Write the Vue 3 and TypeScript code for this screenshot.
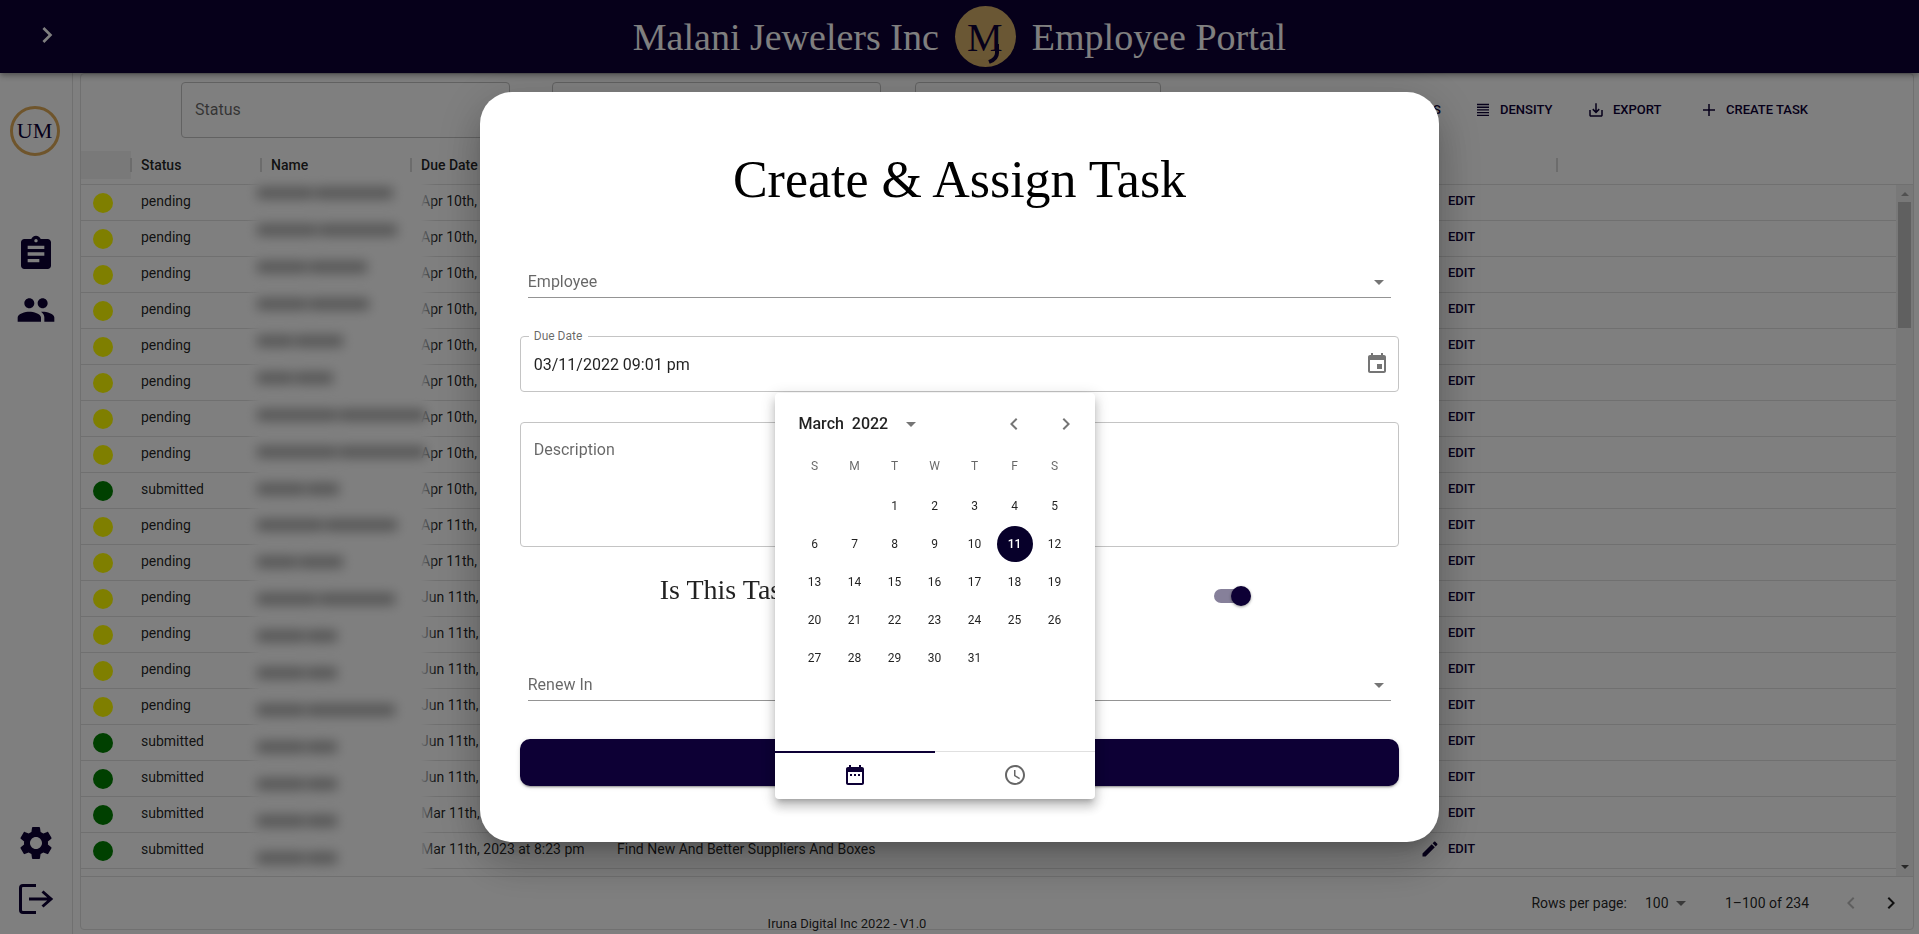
<script setup lang="ts">
import { ref } from 'vue'

interface TaskRow {
  status: 'pending' | 'submitted'
  due: string
  title: string
}

const row = (status: TaskRow['status'], due: string, title = ''): TaskRow => ({ status, due, title })

const rows: TaskRow[] = [
  ...Array.from({ length: 8 }, () => row('pending', 'Apr 10th, 2022 at 8:23 pm')),
  row('submitted', 'Apr 10th, 2022 at 8:23 pm'),
  ...Array.from({ length: 2 }, () => row('pending', 'Apr 11th, 2022 at 8:23 pm')),
  ...Array.from({ length: 4 }, () => row('pending', 'Jun 11th, 2022 at 8:23 pm')),
  ...Array.from({ length: 2 }, () => row('submitted', 'Jun 11th, 2022 at 8:23 pm')),
  row('submitted', 'Mar 11th, 2023 at 8:23 pm'),
  row('submitted', 'Mar 11th, 2023 at 8:23 pm', 'Find New And Better Suppliers And Boxes'),
]

// Widths of the two words of each concealed name
const hiddenNames: [number, number][] = [
  [56, 78], [60, 78], [50, 58], [50, 60], [36, 48], [36, 38], [80, 86], [80, 86], [48, 32],
  [66, 72], [40, 44], [60, 76], [48, 30], [48, 30], [48, 88], [48, 30], [48, 30], [48, 30], [48, 30],
]

const weekDays = ['S', 'M', 'T', 'W', 'T', 'F', 'S']
const days: (number | null)[] = [null, null, ...Array.from({ length: 31 }, (_, i) => i + 1)]
const selectedDay = ref(11)
const dueDate = ref('03/11/2022 09:01 pm')
const recurring = ref(true)
</script>

<template>
  <div class="portal">
    <header class="topbar">
      <button class="expand" aria-label="Open menu">
        <svg viewBox="0 0 24 24"><path d="M10 6 8.59 7.41 13.17 12l-4.58 4.59L10 18l6-6z" /></svg>
      </button>
      <div class="brand">
        <span>Malani Jewelers Inc</span>
        <svg class="logo" viewBox="0 0 61 61" role="img" aria-label="MJ">
          <circle cx="30.5" cy="30.5" r="30.5" />
          <text x="12" y="45" font-size="40">M</text>
          <path d="M42 38v9q0 6-8 9" />
        </svg>
        <span>Employee Portal</span>
      </div>
    </header>

    <div class="body">
      <nav class="sidebar" aria-label="Main">
        <div class="avatar">UM</div>
        <a href="#tasks" aria-label="Tasks">
          <svg viewBox="0 0 24 24"><path d="M19 3h-4.18C14.4 1.84 13.3 1 12 1c-1.3 0-2.4.84-2.82 2H5c-1.1 0-2 .9-2 2v14c0 1.1.9 2 2 2h14c1.1 0 2-.9 2-2V5c0-1.1-.9-2-2-2zm-7 0c.55 0 1 .45 1 1s-.45 1-1 1-1-.45-1-1 .45-1 1-1zm2 14H7v-2h7v2zm3-4H7v-2h10v2zm0-4H7V7h10v2z" /></svg>
        </a>
        <a href="#people" aria-label="People">
          <svg viewBox="0 0 24 24"><path d="M16 11c1.66 0 2.99-1.34 2.99-3S17.66 5 16 5c-1.66 0-3 1.34-3 3s1.34 3 3 3zm-8 0c1.66 0 2.99-1.34 2.99-3S9.66 5 8 5C6.34 5 5 6.34 5 8s1.34 3 3 3zm0 2c-2.33 0-7 1.17-7 3.5V19h14v-2.500c0-2.330-4.670-3.500-7-3.500zm8 0c-.29 0-.62.020-.97.050 1.160.840 1.970 1.970 1.970 3.450V19h6v-2.500c0-2.330-4.670-3.500-7-3.500z" /></svg>
        </a>
        <span class="push"></span>
        <a href="#settings" aria-label="Settings">
          <svg viewBox="0 0 24 24"><path d="M19.14 12.940c.040-.300.060-.610.060-.940 0-.320-.020-.640-.070-.940l2.030-1.580c.180-.140.230-.410.120-.610l-1.920-3.320c-.120-.220-.370-.290-.590-.220l-2.390.960c-.500-.380-1.030-.700-1.620-.940l-.360-2.540c-.040-.240-.240-.410-.480-.410h-3.840c-.240 0-.430.170-.470.410l-.360 2.540c-.590.240-1.130.570-1.620.940l-2.390-.960c-.220-.080-.470 0-.590.220L2.740 8.870c-.120.210-.080.470.120.610l2.030 1.580c-.050.300-.090.630-.090.940s.020.640.070.940l-2.030 1.580c-.180.140-.230.410-.120.610l1.920 3.320c.120.220.370.290.590.220l2.390-.960c.500.380 1.030.700 1.620.940l.360 2.540c.050.240.240.410.480.410h3.840c.240 0 .440-.170.470-.410l.360-2.540c.590-.240 1.130-.560 1.620-.940l2.390.960c.220.080.470 0 .590-.220l1.920-3.320c.120-.220.070-.470-.120-.610l-2.010-1.580zM12 15.600c-1.980 0-3.600-1.620-3.600-3.600s1.620-3.600 3.600-3.600 3.600 1.620 3.600 3.600-1.620 3.600-3.600 3.600z" /></svg>
        </a>
        <a href="#logout" aria-label="Log out">
          <svg class="line" viewBox="0 0 40 40"><path d="M20 6.500H7q-2.500 0-2.500 2.500v22q0 2.500 2.500 2.500h13M13 20h22M26.500 12.500 35 20l-8.500 7.500" /></svg>
        </a>
      </nav>

      <main class="paper">
        <div class="toolbar">
          <div class="filters">
            <div class="filter">
              <label for="f-status">Status</label>
              <select id="f-status"><option></option></select>
            </div>
            <div class="filter second"><select aria-label="Name"><option></option></select></div>
            <div class="filter third"><select aria-label="Due date"><option></option></select></div>
          </div>
          <div class="actions">
            <button>
              <svg viewBox="0 0 24 24"><path d="M10 18h4v-2h-4v2zM3 6v2h18V6H3zm3 7h12v-2H6v2z" /></svg>FILTERS
            </button>
            <button>
              <svg viewBox="0 0 24 24"><path d="M4 3.800h16v1.800H4zM4 7.400h16v1.800H4zM4 11h16v1.800H4zM4 14.600h16v1.800H4zM4 18.200h16V20H4z" /></svg>DENSITY
            </button>
            <button>
              <svg viewBox="0 0 24 24"><path d="M19 12v7H5v-7H3v7c0 1.100.900 2 2 2h14c1.100 0 2-.900 2-2v-7h-2zm-6 .670l2.590-2.580L17 11.500l-5 5-5-5 1.410-1.410L11 12.670V3h2z" /></svg>EXPORT
            </button>
            <button>
              <svg viewBox="0 0 24 24"><path d="M20 13h-7v7h-2v-7H4v-2h7V4h2v7h7v2z" /></svg>CREATE TASK
            </button>
          </div>
        </div>

        <div class="grid">
          <div class="grid-main">
            <table>
              <colgroup>
                <col class="c-dot" /><col class="c-status" /><col class="c-name" /><col class="c-due" />
                <col class="c-title" /><col class="c-edit" /><col />
              </colgroup>
              <thead>
                <tr>
                  <th class="dot-head sep"><div></div></th>
                  <th class="sep">Status</th>
                  <th class="sep">Name</th>
                  <th>Due Date</th>
                  <th></th>
                  <th class="sep"></th>
                  <th></th>
                </tr>
              </thead>
              <tbody>
                <tr v-for="(r, i) in rows" :key="i">
                  <td><span class="dot" :class="r.status"></span></td>
                  <td>{{ r.status }}</td>
                  <td></td>
                  <td>{{ r.due }}</td>
                  <td>{{ r.title }}</td>
                  <td>
                    <button class="edit">
                      <svg viewBox="0 0 24 24"><path d="M3 17.250V21h3.750L17.810 9.940l-3.750-3.750L3 17.250zM20.710 7.040c.390-.390.390-1.020 0-1.410l-2.340-2.340c-.390-.390-1.020-.390-1.410 0l-1.830 1.830 3.750 3.750 1.830-1.830z" /></svg>EDIT
                    </button>
                  </td>
                  <td></td>
                </tr>
              </tbody>
            </table>
            <div class="veil" aria-hidden="true">
              <div v-for="(n, i) in hiddenNames" :key="i" class="smudge">
                <i :style="{ width: n[0] + 'px' }"></i><i :style="{ width: n[1] + 'px' }"></i>
              </div>
            </div>
          </div>
          <div class="scrollbar" aria-hidden="true">
            <svg class="up" viewBox="0 0 17 17"><path d="M5 11h8L9 7z" /></svg>
            <div class="thumb"></div>
            <svg class="down" viewBox="0 0 17 17"><path d="M5 6h8l-4 4z" /></svg>
          </div>
        </div>

        <div class="pager">
          <label for="rows">Rows per page:</label>
          <span class="per-page">
            <select id="rows"><option>100</option></select>
            <svg viewBox="0 0 24 24"><path d="M7 10l5 5 5-5z" /></svg>
          </span>
          <span class="range">1–100 of 234</span>
          <button disabled aria-label="Previous page">
            <svg viewBox="0 0 24 24"><path d="M15.410 7.410 14 6l-6 6 6 6 1.410-1.410L10.830 12z" /></svg>
          </button>
          <button aria-label="Next page">
            <svg viewBox="0 0 24 24"><path d="M10 6 8.590 7.410 13.170 12l-4.580 4.590L10 18l6-6z" /></svg>
          </button>
        </div>
      </main>
    </div>
    <footer class="credit">Iruna Digital Inc 2022 - V1.0</footer>

    <div class="backdrop">
      <form class="dialog" role="dialog" aria-labelledby="dialog-title" @submit.prevent>
        <h1 id="dialog-title">Create &amp; Assign Task</h1>

        <div class="underlined employee">
          <label for="employee">Employee</label>
          <select id="employee"><option></option></select>
          <svg viewBox="0 0 24 24"><path d="M7 10l5 5 5-5z" /></svg>
        </div>

        <div class="outlined due">
          <label for="due">Due Date</label>
          <input id="due" v-model="dueDate" type="text" />
          <button type="button" class="calendar-toggle" aria-label="Choose date">
            <svg viewBox="0 0 24 24"><path d="M17 12h-5v5h5v-5zM16 1v2H8V1H6v2H5c-1.110 0-1.990.900-1.990 2L3 19c0 1.100.890 2 2 2h14c1.100 0 2-.900 2-2V5c0-1.100-.900-2-2-2h-1V1h-2zm3 18H5V8h14v11z" /></svg>
          </button>

          <div class="picker">
            <div class="picker-head">
              <button type="button" class="month">
                March&nbsp; 2022
                <svg viewBox="0 0 24 24"><path d="M7 10l5 5 5-5z" /></svg>
              </button>
              <button type="button" class="arrow" aria-label="Previous month">
                <svg viewBox="0 0 24 24"><path d="M15.410 7.410 14 6l-6 6 6 6 1.410-1.410L10.830 12z" /></svg>
              </button>
              <button type="button" class="arrow" aria-label="Next month">
                <svg viewBox="0 0 24 24"><path d="M10 6 8.590 7.410 13.170 12l-4.580 4.590L10 18l6-6z" /></svg>
              </button>
            </div>
            <div class="week names">
              <span v-for="(d, i) in weekDays" :key="i">{{ d }}</span>
            </div>
            <div class="week dates">
              <template v-for="(d, i) in days" :key="i">
                <span v-if="d === null"></span>
                <button v-else type="button" :class="{ selected: d === selectedDay }" @click="selectedDay = d">{{ d }}</button>
              </template>
            </div>
            <div class="tabs">
              <button type="button" class="active" aria-label="Date">
                <svg viewBox="0 0 24 24"><path d="M9 11H7v2h2v-2zm4 0h-2v2h2v-2zm4 0h-2v2h2v-2zm2-7h-1V2h-2v2H8V2H6v2H5c-1.110 0-1.990.900-1.990 2L3 20c0 1.100.890 2 2 2h14c1.100 0 2-.900 2-2V6c0-1.100-.900-2-2-2zm0 16H5V9h14v11z" /></svg>
              </button>
              <button type="button" aria-label="Time">
                <svg viewBox="0 0 24 24"><path d="M11.990 2C6.470 2 2 6.480 2 12s4.470 10 9.990 10C17.520 22 22 17.520 22 12S17.520 2 11.990 2zM12 20c-4.420 0-8-3.580-8-8s3.580-8 8-8 8 3.580 8 8-3.580 8-8 8zm.500-13H11v6l5.250 3.150.750-1.230-4.500-2.670z" /></svg>
              </button>
            </div>
          </div>
        </div>

        <div class="outlined description">
          <textarea aria-label="Description" placeholder="Description"></textarea>
        </div>

        <div class="recurring">
          <label for="recurring">Is This Task Recurring?</label>
          <input id="recurring" v-model="recurring" type="checkbox" role="switch" />
        </div>

        <div class="underlined renew">
          <label for="renew">Renew In</label>
          <select id="renew"><option></option></select>
          <svg viewBox="0 0 24 24"><path d="M7 10l5 5 5-5z" /></svg>
        </div>

        <button type="submit" class="submit" aria-label="Create task"></button>
      </form>
    </div>
  </div>
</template>

<style>
body {
  background: #fff;
}
</style>

<style scoped>
.portal {
  position: relative;
  display: flex;
  flex-direction: column;
  height: 100vh;
  overflow: hidden;
  font-family: Roboto, 'Liberation Sans', sans-serif;
  font-size: 14px;
  line-height: 20px;
  color: rgba(0, 0, 0, 0.87);
}
.portal *,
.portal *::before,
.portal *::after {
  box-sizing: border-box;
}
button,
select,
input,
textarea {
  margin: 0;
  padding: 0;
  border: 0;
  background: none;
  font: inherit;
  color: inherit;
  appearance: none;
  outline: none;
}
svg {
  display: block;
  fill: currentColor;
}

/* top bar */
.topbar {
  position: relative;
  z-index: 1;
  flex: none;
  display: flex;
  align-items: center;
  justify-content: center;
  height: 73px;
  background: #0d0035;
  color: #fff;
  box-shadow: 0 2px 4px -1px rgba(0, 0, 0, 0.2), 0 4px 5px rgba(0, 0, 0, 0.14), 0 1px 10px rgba(0, 0, 0, 0.12);
}
.expand {
  position: absolute;
  left: 31px;
  top: 19px;
}
.expand svg {
  width: 32px;
  height: 32px;
}
.brand {
  display: flex;
  align-items: center;
  gap: 16px;
  font-family: 'Liberation Serif', serif;
  font-size: 38px;
  line-height: 48px;
}
.logo {
  width: 61px;
  height: 61px;
  overflow: visible;
  font-family: 'Liberation Serif', serif;
}
.logo circle {
  fill: #d4ae68;
}
.logo text {
  fill: #0d0035;
}
.logo path {
  fill: none;
  stroke: #0d0035;
  stroke-width: 4;
}

/* side bar */
.body {
  flex: 1;
  display: flex;
  min-height: 0;
}
.sidebar {
  flex: none;
  display: flex;
  flex-direction: column;
  align-items: center;
  width: 73px;
  padding: 33px 1px 15px 0;
  border-right: 1px solid #e0e0e0;
  color: #0d0035;
}
.avatar {
  width: 50px;
  height: 50px;
  margin: 0 2px 94px 0;
  border: 3px solid #dfab58;
  border-radius: 50%;
  font-family: 'Liberation Serif', serif;
  font-size: 22px;
  line-height: 44px;
  text-align: center;
}
.sidebar a {
  margin: -16px 0 32px;
  color: inherit;
}
.sidebar a:last-child {
  margin-bottom: 0;
}
.sidebar svg {
  width: 40px;
  height: 40px;
}
.sidebar svg.line {
  fill: none;
  stroke: currentColor;
  stroke-width: 3;
}
.push {
  flex: 1;
}

/* task grid */
.paper {
  flex: 1;
  display: flex;
  flex-direction: column;
  min-width: 0;
  margin: 0 5px 4px 7px;
  border: 1px solid #e0e0e0;
  border-radius: 4px;
}
.toolbar {
  flex: none;
  display: flex;
  justify-content: space-between;
  align-items: center;
  height: 72px;
  padding: 0 100px;
}
.filters {
  display: flex;
}
.filter {
  position: relative;
  width: 329px;
}
.filter.second {
  margin-left: 42px;
}
.filter.third {
  width: 246px;
  margin-left: 34px;
}
.filter select {
  display: block;
  width: 100%;
  height: 56px;
  border: 1px solid #c4c4c4;
  border-radius: 4px;
}
.filter label {
  position: absolute;
  left: 14px;
  top: 18px;
  font-size: 16px;
  color: rgba(0, 0, 0, 0.6);
}
.actions {
  display: grid;
  grid-template-columns: repeat(4, 113px);
}
.actions button,
.edit {
  display: flex;
  align-items: center;
  gap: 8px;
  font-size: 13px;
  font-weight: 500;
  color: #0d0035;
  white-space: nowrap;
}
.actions button:first-child {
  justify-content: flex-end;
  padding-right: 33px;
}
.actions svg {
  width: 18px;
  height: 18px;
}
.grid {
  flex: 1;
  display: flex;
  min-height: 0;
  border-bottom: 1px solid #e0e0e0;
}
.grid-main {
  position: relative;
  flex: 1;
  min-width: 0;
  overflow: hidden;
}
table {
  width: 100%;
  border-spacing: 0;
  table-layout: fixed;
}
.c-dot {
  width: 50px;
}
.c-status {
  width: 130px;
}
.c-name,
.c-edit {
  width: 150px;
}
.c-due {
  width: 196px;
}
.c-title {
  width: 800px;
}
th {
  position: relative;
  height: 39px;
  padding: 0 10px;
  border-bottom: 1px solid #e0e0e0;
  font-weight: 500;
  text-align: left;
}
.dot-head {
  padding: 0;
}
.dot-head div {
  height: 28px;
  background: #f2f2f2;
}
.sep::after {
  content: '';
  position: absolute;
  right: -1px;
  top: 12px;
  width: 2px;
  height: 14px;
  background: #d8d8d8;
}
td {
  height: 36px;
  padding: 0 10px 3px;
  border-bottom: 1px solid #e0e0e0;
  white-space: nowrap;
}
td:first-child {
  padding: 0 12px;
}
.dot {
  display: block;
  width: 20px;
  height: 20px;
  border-radius: 50%;
}
.dot.pending {
  background: #ff0;
}
.dot.submitted {
  background: #008000;
}
.edit svg {
  width: 20px;
  height: 20px;
  margin-left: 3px;
}
.veil {
  position: absolute;
  left: 165px;
  top: 36px;
  bottom: 0;
  width: 190px;
  display: flex;
  flex-direction: column;
  justify-content: space-between;
  padding: 5px 0 12px 11px;
  background: linear-gradient(90deg, rgba(255, 255, 255, 0), #fff 14px, #fff 174px, rgba(255, 255, 255, 0));
}
.smudge {
  display: flex;
  gap: 2px;
  filter: blur(6px);
}
.smudge i {
  height: 12px;
  background: #acacac;
}
.scrollbar {
  flex: none;
  display: flex;
  flex-direction: column;
  width: 17px;
  margin-top: 38px;
  border-top: 1px solid #e0e0e0;
  background: #f1f1f1;
}
.scrollbar svg {
  width: 17px;
  height: 17px;
}
.scrollbar .up {
  color: #a3a3a3;
}
.scrollbar .down {
  margin-top: auto;
  color: #505050;
}
.thumb {
  height: 126px;
  margin: 0 2px;
  background: #c1c1c1;
}
.pager {
  flex: none;
  display: flex;
  align-items: center;
  justify-content: flex-end;
  height: 52px;
  padding-right: 2px;
}
.per-page {
  position: relative;
  width: 48px;
  margin-left: 18px;
}
.per-page select {
  display: block;
  width: 100%;
  height: 24px;
}
.per-page svg {
  position: absolute;
  right: 0;
  top: 0;
  width: 24px;
  height: 24px;
  color: rgba(0, 0, 0, 0.54);
  pointer-events: none;
}
.range {
  margin: 0 22px 0 32px;
}
.pager button {
  width: 40px;
  padding: 8px;
}
.pager button:disabled {
  color: rgba(0, 0, 0, 0.26);
}
.credit {
  position: absolute;
  left: 40%;
  bottom: 0;
  font-size: 13px;
}

/* dialog */
.backdrop {
  position: fixed;
  inset: 0;
  z-index: 2;
  display: flex;
  align-items: center;
  justify-content: center;
  background: rgba(0, 0, 0, 0.5);
}
.dialog {
  width: 50%;
  padding: 48px 40px 56px;
  border-radius: 32px;
  background: #fff;
  box-shadow: 0 11px 15px -7px rgba(0, 0, 0, 0.2), 0 24px 38px 3px rgba(0, 0, 0, 0.14), 0 9px 46px 8px rgba(0, 0, 0, 0.12);
  font-size: 16px;
}
h1 {
  margin: 0 0 46px;
  font-family: 'Liberation Serif', serif;
  font-size: 52px;
  font-weight: 400;
  line-height: 80px;
  text-align: center;
  color: #000;
}
.underlined {
  position: relative;
  margin: 0 8px;
  border-bottom: 1px solid #949494;
}
.underlined label {
  position: absolute;
  left: 0;
  top: 6px;
  color: rgba(0, 0, 0, 0.6);
}
.underlined select {
  display: block;
  width: 100%;
  height: 31px;
}
.underlined svg {
  position: absolute;
  right: 0;
  top: 4px;
  width: 24px;
  height: 24px;
  color: rgba(0, 0, 0, 0.54);
  pointer-events: none;
}
.outlined {
  position: relative;
  display: flex;
  border: 1px solid #c4c4c4;
  border-radius: 4px;
}
.due {
  height: 56px;
  margin: 38px 0 30px;
}
.due label {
  position: absolute;
  left: 8px;
  top: -11px;
  padding: 0 6px 0 5px;
  background: #fff;
  font-size: 12px;
  color: rgba(0, 0, 0, 0.6);
}
.due input {
  flex: 1;
  padding: 2px 0 0 13px;
}
.calendar-toggle {
  padding: 0 9px;
  color: rgba(0, 0, 0, 0.54);
}
.calendar-toggle svg {
  width: 24px;
  height: 24px;
}
.description {
  height: 125px;
}
.description textarea {
  flex: 1;
  padding: 17px 13px;
  resize: none;
}
.description textarea::placeholder {
  color: rgba(0, 0, 0, 0.6);
}
.recurring {
  display: flex;
  justify-content: space-between;
  height: 38px;
  margin: 30px 0 54px;
  padding: 0 151px 0 140px;
}
.recurring label {
  font-family: 'Liberation Serif', serif;
  font-size: 28px;
  line-height: 26px;
}
.recurring input {
  position: relative;
  align-self: center;
  width: 34px;
  height: 14px;
  border-radius: 7px;
  background: #cfcfcf;
}
.recurring input::after {
  content: '';
  position: absolute;
  left: -3px;
  top: -3px;
  width: 20px;
  height: 20px;
  border-radius: 50%;
  background: #fff;
  box-shadow: 0 1px 3px rgba(0, 0, 0, 0.4);
}
.recurring input:checked {
  background: #86809a;
}
.recurring input:checked::after {
  left: 17px;
  background: #0d0035;
}
.submit {
  display: block;
  width: 100%;
  height: 47px;
  margin-top: 38px;
  border-radius: 10px;
  background: #0d0035;
  box-shadow: 0 3px 1px -2px rgba(0, 0, 0, 0.2), 0 2px 2px rgba(0, 0, 0, 0.14), 0 1px 5px rgba(0, 0, 0, 0.12);
}

/* date picker */
.picker {
  position: absolute;
  z-index: 1;
  left: calc(50% - 185px);
  top: 56px;
  width: 320px;
  border-radius: 4px;
  background: #fff;
  box-shadow: 0 5px 5px -3px rgba(0, 0, 0, 0.2), 0 8px 10px 1px rgba(0, 0, 0, 0.14), 0 3px 14px 2px rgba(0, 0, 0, 0.12);
}
.picker-head {
  display: flex;
  align-items: center;
  height: 62px;
  padding: 0 9px 0 24px;
}
.month {
  flex: 1;
  display: flex;
  align-items: center;
  gap: 11px;
  font-weight: 500;
}
.picker-head svg {
  width: 24px;
  height: 24px;
}
.month svg,
.arrow {
  color: rgba(0, 0, 0, 0.54);
}
.arrow {
  margin-left: 12px;
  padding: 0 8px;
}
.week {
  display: grid;
  grid-template-columns: repeat(7, 36px);
  justify-content: center;
  column-gap: 4px;
  font-size: 12px;
  text-align: center;
}
.names {
  padding: 1px 0;
  line-height: 20px;
  color: rgba(0, 0, 0, 0.6);
}
.dates {
  grid-auto-rows: 36px;
  row-gap: 2px;
  height: 274px;
  padding-top: 11px;
}
.dates button {
  border-radius: 50%;
}
.dates .selected {
  background: #07002a;
  color: #fff;
  font-weight: 500;
}
.tabs {
  display: flex;
  height: 48px;
  box-shadow: inset 0 1px #e0e0e0;
}
.tabs button {
  flex: 1;
  display: flex;
  align-items: center;
  justify-content: center;
  color: rgba(0, 0, 0, 0.6);
}
.tabs .active {
  box-shadow: inset 0 2px #0d0035;
  color: #0d0035;
}
.tabs svg {
  width: 24px;
  height: 24px;
}
</style>
